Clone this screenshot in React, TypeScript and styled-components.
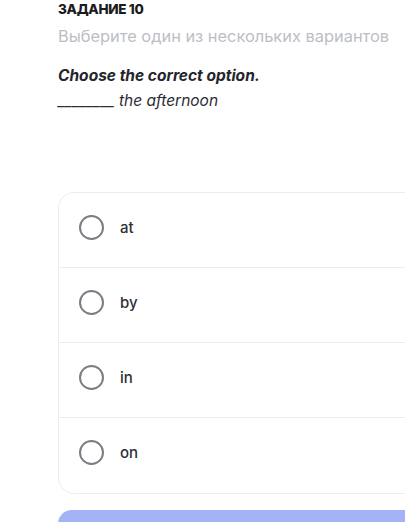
import React from 'react'
import styled, { createGlobalStyle } from 'styled-components'

const GlobalStyle = createGlobalStyle`
  html, body {
    margin: 0;
    padding: 0;
    background: #ffffff;
    overflow: hidden;
  }
  body {
    font-family: Inter, "Noto Sans", sans-serif;
    -webkit-font-smoothing: antialiased;
  }
`

const Page = styled.div`
  width: 405px;
  height: 522px;
  overflow: hidden;
  padding-left: 58px;
  box-sizing: border-box;
`

const TaskLabel = styled.div`
  font-size: 13.5px;
  line-height: 17px;
  font-weight: 800;
  color: #1b1b22;
  letter-spacing: -0.3px;
  padding-top: 1px;
`

const Hint = styled.div`
  margin-top: 7px;
  font-size: 16.4px;
  line-height: 22px;
  font-weight: 400;
  color: #bdbdc5;
  white-space: nowrap;
`

const Prompt = styled.div`
  margin-top: 19px;
  font-size: 15.5px;
  line-height: 20px;
  font-weight: 700;
  font-style: italic;
  color: #24242c;
`

const Sentence = styled.div`
  margin-top: 5px;
  font-size: 15.5px;
  line-height: 20px;
  font-style: italic;
  color: #2c2c34;
  white-space: nowrap;
`

const Options = styled.div`
  margin-top: 81px;
  width: 380px;
  border: 1px solid #ededf0;
  border-radius: 16px;
  display: flex;
  flex-direction: column;
`

const Option = styled.label<{ $last?: boolean }>`
  height: 75px;
  box-sizing: border-box;
  display: flex;
  align-items: center;
  gap: 16px;
  padding: 0 0 6px 20px;
  border-bottom: ${({ $last }) => ($last ? 'none' : '1px solid #ededf0')};
  cursor: pointer;
`

const Radio = styled.span`
  width: 25px;
  height: 25px;
  box-sizing: border-box;
  border-radius: 50%;
  border: 2.5px solid #7c7c84;
  flex-shrink: 0;
`

const OptionText = styled.span`
  font-size: 15px;
  font-weight: 500;
  color: #2e2e36;
`

const SubmitButton = styled.button`
  margin-top: 16px;
  width: 380px;
  height: 44px;
  border: none;
  border-radius: 14px;
  background: #a3b3f6;
`

const options = ['at', 'by', 'in', 'on']

const App = () => {
  return (
    <Page>
      <GlobalStyle />
      <TaskLabel>ЗАДАНИЕ 10</TaskLabel>
      <Hint>Выберите один из нескольких вариантов</Hint>
      <Prompt>Choose the correct option.</Prompt>
      <Sentence>________ the afternoon</Sentence>
      <Options>
        {options.map((o, i) => (
          <Option key={o} $last={i === options.length - 1}>
            <Radio />
            <OptionText>{o}</OptionText>
          </Option>
        ))}
      </Options>
      <SubmitButton />
    </Page>
  )
}

export default App
